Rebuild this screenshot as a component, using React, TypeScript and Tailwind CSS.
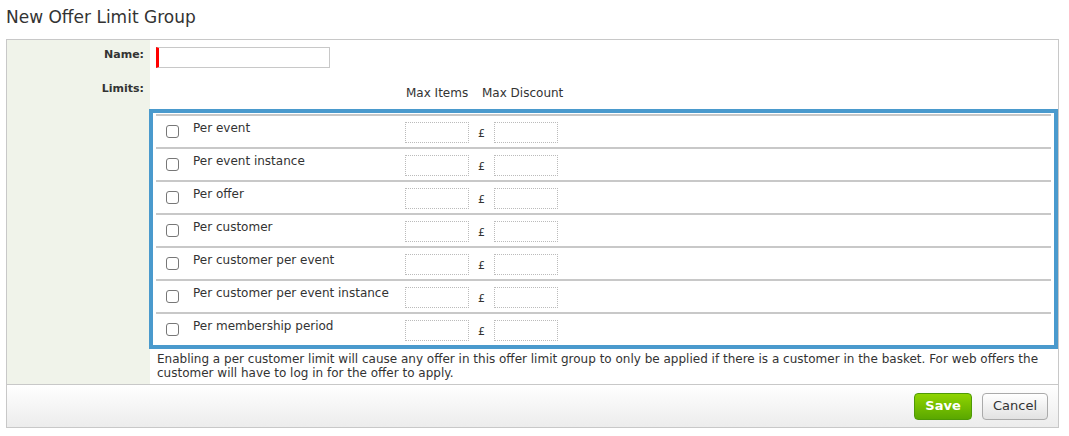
export default function App() {
  const rows = ["Per event","Per event instance","Per offer","Per customer","Per customer per event","Per customer per event instance","Per membership period"];
  return (
    <div className="w-[1069px] h-[436px] bg-white text-[12px] text-[#333]" style={{fontFamily:'"DejaVu Sans", Verdana, sans-serif'}}>
      <div className="pl-[6px] pt-[5px] h-[39px] text-[17px] text-[#333]">New Offer Limit Group</div>
      <div className="ml-[6px] w-[1053px] h-[389px] border border-[#c8c8c8] flex flex-col">
        <div className="flex flex-1">
          <div className="w-[145px] bg-[#f0f3ea] text-right pr-[6px] font-bold text-[11px]">
            <div className="pt-[7px] h-[41px]">Name:</div>
            <div>Limits:</div>
          </div>
          <div className="flex-1 flex flex-col">
            <div className="pt-[7px] pl-[6px] h-[41px]">
              <div className="w-[174px] h-[21px] border border-[#c8c8c8] border-l-[3px] border-l-[#f00]"></div>
            </div>
            <div className="h-[28px] pt-[3px] flex">
              <div className="ml-[256px] w-[76px]">Max Items</div>
              <div>Max Discount</div>
            </div>
            <div className="-ml-[1px] w-[909px] border-4 border-[#4a9acd] pt-[1px] px-[3px]">
              {rows.map((r) => (
                <div key={r} className="h-[33px] border-t-2 border-[#c8c8c8] flex items-center">
                  <div className="w-[13px] h-[13px] border border-[#777] rounded-[3px] ml-[10px] mr-[14px] bg-white"></div>
                  <div className="w-[212px] -mt-[7px]">{r}</div>
                  <div className="w-[64px] h-[21px] border border-dotted border-[#bbb] mt-[2px]"></div>
                  <div className="w-[25px] text-center mt-[6px] text-[11px]">£</div>
                  <div className="w-[64px] h-[21px] border border-dotted border-[#bbb] mt-[2px]"></div>
                </div>
              ))}
            </div>
            <div className="pl-[7px] pr-[16px] pt-[3px] leading-[14px]">Enabling a per customer limit will cause any offer in this offer limit group to only be applied if there is a customer in the basket. For web offers the customer will have to log in for the offer to apply.</div>
          </div>
        </div>
        <div className="h-[43px] border-t border-[#c8c8c8] bg-gradient-to-b from-white to-[#ececec] flex items-center justify-end pr-[10px] gap-[10px]">
          <button className="w-[58px] h-[27px] rounded-[4px] border border-[#4e9a06] bg-gradient-to-b from-[#8fd400] to-[#5aa800] text-white font-bold text-[13px]">Save</button>
          <button className="w-[66px] h-[27px] rounded-[4px] border border-[#aaa] bg-gradient-to-b from-white to-[#e2e2e2] text-[#333] text-[13px]">Cancel</button>
        </div>
      </div>
    </div>
  );
}
